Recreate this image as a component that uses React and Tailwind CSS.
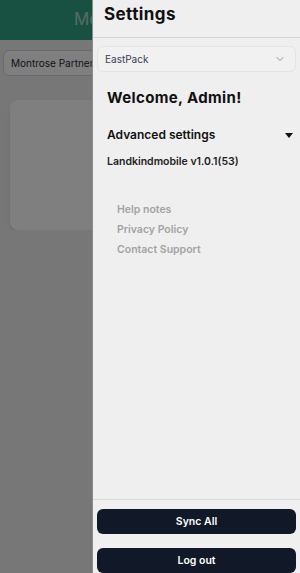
import React from "react";
import { ChevronDown } from "lucide-react";

const App = () => {
  return (
    <div
      className="relative w-[300px] h-[573px] overflow-hidden bg-[#efefef]"
      style={{ fontFamily: "Inter, 'Noto Sans', sans-serif" }}
    >
      {/* page behind the drawer, only the left strip shows */}
      <div className="w-[92px] overflow-hidden">
        <div className="w-[300px] flex flex-col">
          <div className="h-10 bg-[#30a282] flex items-center justify-center">
            <span className="text-[17px] text-white/60 mr-[3px]">Montrose Partners</span>
          </div>
          <div className="px-[3px] pt-[10px]">
            <div className="h-[26px] rounded-md border border-gray-300 bg-white flex items-center pl-[7px] text-[10px] text-gray-800">
              Montrose Partners
            </div>
          </div>
          <div className="px-[10px] pt-[24px]">
            <div className="h-[130px] rounded-lg bg-white shadow-md"></div>
          </div>
        </div>
      </div>

      {/* overlay */}
      <div className="absolute inset-0 bg-black/50"></div>

      {/* drawer */}
      <div className="absolute top-0 right-0 bottom-0 w-[208px] bg-[#efefef] flex flex-col border-l border-[#8a8a8a]">
        <div className="h-[38px] border-b border-[#d4d4d4] flex items-start pl-[11px] pt-[2px]">
          <span className="text-[17px] font-bold tracking-wide text-[#111]">Settings</span>
        </div>
        <div className="flex-1 flex flex-col">
          <div className="px-1 pt-[8px]">
            <div className="h-[26px] rounded-md border border-[#e4e4ea] bg-[#f1f1f1] flex items-center justify-between pl-[7px] pr-[9px]">
              <span className="text-[10px] text-gray-700">EastPack</span>
              <ChevronDown className="w-3 h-3 text-gray-500" strokeWidth={1.5} />
            </div>
          </div>
          <div className="pl-[14px] pr-[6px] pt-[14px]">
            <h1 className="text-[15px] font-bold tracking-wide text-[#111] leading-[24px]">
              Welcome, Admin!
            </h1>
            <div className="mt-[15px] flex items-center justify-between h-[20px]">
              <span className="text-[12px] font-semibold text-[#111]">
                Advanced settings
              </span>
              <svg width="8" height="5" viewBox="0 0 8 5" className="mr-[1px]">
                <path d="M0 0 L8 0 L4 5 Z" fill="#111" />
              </svg>
            </div>
            <div className="mt-[9px] text-[10.5px] font-semibold text-[#222] leading-[16px]">
              Landkindmobile v1.0.1(53)
            </div>
            <div className="mt-[32px] pl-[10px] flex flex-col gap-[4px] text-[10.5px] font-semibold text-[#a3a3a3]">
              <span className="leading-[16px]">Help notes</span>
              <span className="leading-[16px]">Privacy Policy</span>
              <span className="leading-[16px]">Contact Support</span>
            </div>
          </div>
        </div>
        <div className="border-t border-[#dcdcdc] bg-[#f0f0f0] px-1 pt-[9px] flex flex-col gap-[14px] h-[74px]">
          <button className="h-[28px] rounded-md bg-[#111827] text-white text-[10.5px] font-semibold">
            Sync All
          </button>
          <button className="h-[28px] rounded-md bg-[#111827] text-white text-[10.5px] font-semibold">
            Log out
          </button>
        </div>
      </div>
    </div>
  );
};

export default App;
